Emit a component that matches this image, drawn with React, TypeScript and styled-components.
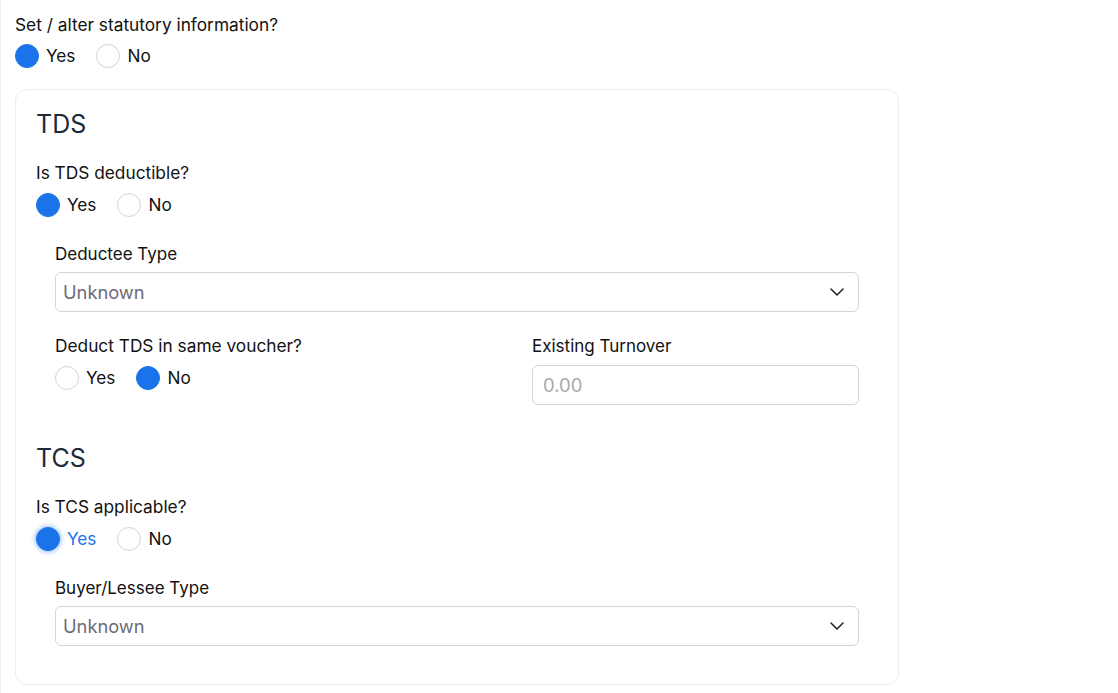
import React from "react";
import styled, { createGlobalStyle } from "styled-components";

const Global = createGlobalStyle`
  html, body { margin: 0; padding: 0; background: #fff; }
  body {
    font-family: Inter, "Noto Sans", "Liberation Sans", sans-serif;
    color: #111827;
    border-left: 1px solid #ececec;
    min-height: 693px;
    box-sizing: border-box;
  }
  * { box-sizing: border-box; }
`;

const Page = styled.div`
  padding: 13px 0 0 14px;
  width: 898px;
`;

const Question = styled.div<{ $mb?: number }>`
  font-size: 17.3px;
  line-height: 24px;
  color: #111;
  margin-bottom: ${(p) => p.$mb ?? 8}px;
`;

const RadioRow = styled.div<{ $mb?: number }>`
  display: flex;
  align-items: center;
  gap: 21px;
  height: 24px;
  margin-bottom: ${(p) => p.$mb ?? 0}px;
`;

const RadioOption = styled.label<{ $focus?: boolean }>`
  display: flex;
  align-items: center;
  gap: 7px;
  font-size: 17.2px;
  line-height: 24px;
  color: ${(p) => (p.$focus ? "#1a73e8" : "#111")};
  cursor: pointer;
`;

const Circle = styled.span<{ $checked?: boolean; $focus?: boolean }>`
  width: 24px;
  height: 24px;
  border-radius: 50%;
  flex: none;
  background: ${(p) => (p.$checked ? "#1a73e8" : "#fff")};
  border: 1px solid ${(p) => (p.$checked ? "#1a73e8" : "#d4d4d8")};
  box-shadow: ${(p) => (p.$focus ? "0 0 5px 1px rgba(26,115,232,0.45)" : "none")};
`;

const Card = styled.div`
  border: 1px solid #ececef;
  border-radius: 12px;
  padding: 18px 20px 38px 20px;
`;

const Heading = styled.h2<{ $mt?: number }>`
  margin: ${(p) => p.$mt ?? 0}px 0 21px 0;
  font-size: 25px;
  line-height: 32px;
  font-weight: 400;
  color: #1e293b;
`;

const Indented = styled.div`
  padding: 0 19px;
`;

const FieldLabel = styled.div<{ $mb?: number }>`
  font-size: 17px;
  line-height: 24px;
  color: #111;
  margin-bottom: ${(p) => p.$mb ?? 6}px;
`;

const SelectBox = styled.div`
  height: 40px;
  border: 1px solid #d4d4dc;
  border-radius: 6px;
  display: flex;
  align-items: center;
  justify-content: space-between;
  padding: 0 14px 0 7px;
  font-size: 18.3px;
  color: #6b6b76;
  background: #fff;
`;

const InputBox = styled.div`
  height: 40px;
  border: 1px solid #d4d4dc;
  border-radius: 6px;
  display: flex;
  align-items: center;
  padding: 0 10px;
  font-size: 18.5px;
  color: #a8a8b0;
  background: #fff;
`;

const TwoCol = styled.div`
  display: grid;
  grid-template-columns: 457px 1fr;
  column-gap: 20px;
  margin-top: 22px;
`;

const Col = styled.div`
  display: flex;
  flex-direction: column;
`;

const Chevron = () => (
  <svg width="14" height="8" viewBox="0 0 14 8" fill="none">
    <path d="M1 1l6 6 6-6" stroke="#222" strokeWidth="1.5" strokeLinecap="round" strokeLinejoin="round" />
  </svg>
);

const Radio = ({ label, checked, focus }: { label: string; checked?: boolean; focus?: boolean }) => (
  <RadioOption $focus={focus}>
    <Circle $checked={checked} $focus={focus} />
    {label}
  </RadioOption>
);

export default function App() {
  return (
    <>
      <Global />
      <Page>
        <Question $mb={7}>Set / alter statutory information?</Question>
        <RadioRow $mb={21}>
          <Radio label="Yes" checked />
          <Radio label="No" />
        </RadioRow>
        <Card>
          <Heading>TDS</Heading>
          <Question>Is TDS deductible?</Question>
          <RadioRow $mb={25}>
            <Radio label="Yes" checked />
            <Radio label="No" />
          </RadioRow>
          <Indented>
            <FieldLabel>Deductee Type</FieldLabel>
            <SelectBox>
              <span>Unknown</span>
              <Chevron />
            </SelectBox>
            <TwoCol>
              <Col>
                <Question>Deduct TDS in same voucher?</Question>
                <RadioRow>
                  <Radio label="Yes" />
                  <Radio label="No" checked />
                </RadioRow>
              </Col>
              <Col>
                <FieldLabel $mb={7}>Existing Turnover</FieldLabel>
                <InputBox>0.00</InputBox>
              </Col>
            </TwoCol>
          </Indented>
          <Heading $mt={37}>TCS</Heading>
          <Question>Is TCS applicable?</Question>
          <RadioRow $mb={25}>
            <Radio label="Yes" checked focus />
            <Radio label="No" />
          </RadioRow>
          <Indented>
            <FieldLabel>Buyer/Lessee Type</FieldLabel>
            <SelectBox>
              <span>Unknown</span>
              <Chevron />
            </SelectBox>
          </Indented>
        </Card>
      </Page>
    </>
  );
}
